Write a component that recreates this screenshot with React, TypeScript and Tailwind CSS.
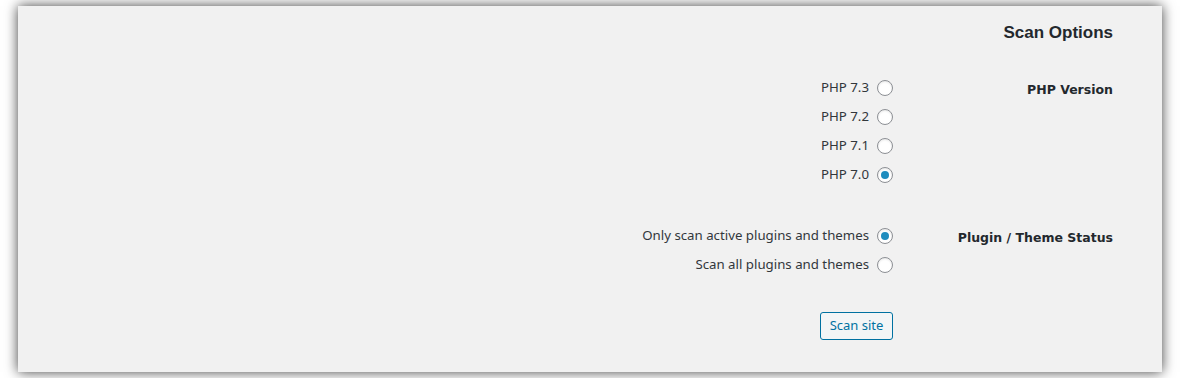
import React, { useState } from 'react'

const versions = ['PHP 7.3', 'PHP 7.2', 'PHP 7.1', 'PHP 7.0']
const statuses = ['Only scan active plugins and themes', 'Scan all plugins and themes']

function Radio({ label, checked, onClick }: { label: string; checked: boolean; onClick: () => void }) {
  return (
    <label className="flex h-[29px] items-center justify-end gap-2 cursor-pointer" onClick={onClick}>
      <span className="text-[13.25px] text-[#32373c]">{label}</span>
      <span className="flex h-4 w-4 items-center justify-center rounded-full border border-[#8c8f94] bg-white shadow-[inset_0_1px_2px_rgba(0,0,0,0.1)]">
        {checked && <span className="h-2 w-2 rounded-full bg-[#1e8cbe]" />}
      </span>
    </label>
  )
}

function Row({ title, children }: { title: string; children: React.ReactNode }) {
  return (
    <div className="flex flex-row-reverse">
      <div className="w-[220px] h-[29px] pt-[5px] flex items-center justify-end">
        <span className="font-['DejaVu_Sans',sans-serif] text-[12.5px] font-bold text-[#23282d]">{title}</span>
      </div>
      <div className="flex-1 flex flex-col">{children}</div>
    </div>
  )
}

export default function App() {
  const [version, setVersion] = useState(3)
  const [status, setStatus] = useState(0)

  return (
    <div className="bg-white px-[18px] py-[6px] font-['Noto_Sans',sans-serif]">
      <div className="h-[366px] bg-[#f1f1f1] shadow-[0_0_12px_rgba(0,0,0,0.75)] pt-[15px] pr-[49px] flex flex-col">
        <h2 className="h-6 leading-6 text-right font-['Liberation_Sans',sans-serif] text-[17px] font-bold text-[#23282d]">
          Scan Options
        </h2>

        <div className="mt-[28px]">
          <Row title="PHP Version">
            {versions.map((v, i) => (
              <Radio key={v} label={v} checked={version === i} onClick={() => setVersion(i)} />
            ))}
          </Row>
        </div>

        <div className="mt-[32px]">
          <Row title="Plugin / Theme Status">
            {statuses.map((s, i) => (
              <Radio key={s} label={s} checked={status === i} onClick={() => setStatus(i)} />
            ))}
          </Row>
        </div>

        <div className="mt-[33px] flex justify-end pr-[220px]">
          <button
            type="button"
            className="h-7 w-[73px] rounded-[3px] border border-[#0071a1] bg-[#f3f5f6] text-[13px] text-[#0071a1]"
          >
            Scan site
          </button>
        </div>
      </div>
    </div>
  )
}
